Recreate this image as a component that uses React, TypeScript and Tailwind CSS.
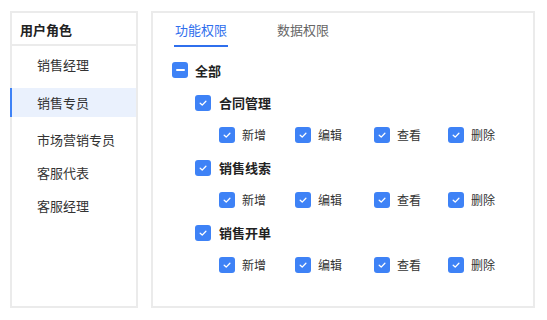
import React from "react";

const Check = ({ ind = false }: { ind?: boolean }) => (
  <span className="w-4 h-4 rounded-[3px] bg-[#3e82f6] flex items-center justify-center shrink-0">
    {ind ? (
      <span className="w-[9px] h-[2px] bg-white rounded-[1px]" />
    ) : (
      <svg width="10" height="10" viewBox="0 0 10 10">
        <path d="M2.2 5.3 L4.2 7.1 L7.9 3.2" stroke="white" strokeWidth="1.3" fill="none" strokeLinecap="round" strokeLinejoin="round" />
      </svg>
    )}
  </span>
);

const roles = ["销售经理", "销售专员", "市场营销专员", "客服代表", "客服经理"];
const groups = ["合同管理", "销售线索", "销售开单"];
const actions: [string, string][] = [
  ["新增", "w-[76px]"],
  ["编辑", "w-[79px]"],
  ["查看", "w-[74px]"],
  ["删除", "w-[60px]"],
];

export default function App() {
  return (
    <div className="w-[547px] h-[320px] bg-white flex gap-[13px] pl-[10px] pt-[11px] font-['Noto_Sans_CJK_SC','Noto_Sans',sans-serif]">
      <div className="w-[128px] h-[297px] border-2 border-[#ebebeb] flex flex-col">
        <div className="h-[33px] border-b-2 border-[#ebebeb] flex items-center pl-[8px] pt-[2px] text-[13px] font-bold text-[#222]">
          用户角色
        </div>
        <div className="flex flex-col">
          <div className="h-[38px] flex items-center pl-[25px] text-[13px] text-[#333]">{roles[0]}</div>
          <div className="h-[29px] mt-[4px] -ml-[2px] border-l-2 border-[#3e82f6] bg-[#eaf1fd] flex items-center pl-[25px] text-[13px] text-[#333]">{roles[1]}</div>
          <div className="h-[33px] mt-[6px] flex items-center pl-[25px] text-[13px] text-[#333]">{roles[2]}</div>
          <div className="h-[33px] flex items-center pl-[25px] text-[13px] text-[#333]">{roles[3]}</div>
          <div className="h-[34px] flex items-center pl-[25px] text-[13px] text-[#333]">{roles[4]}</div>
        </div>
      </div>
      <div className="w-[384px] h-[297px] border-2 border-[#ebebeb] flex flex-col">
        <div className="h-[34px] flex pl-[21px] gap-[48px]">
          <div className="h-full flex flex-col items-center justify-end">
            <span className="text-[13px] text-[#2f6fed] leading-none px-[1px] pb-[9px]">功能权限</span>
            <span className="w-[54px] h-[2px] bg-[#2f6fed]" />
          </div>
          <div className="h-full flex flex-col items-center justify-end">
            <span className="text-[13px] text-[#666] leading-none px-[1px] pb-[11px]">数据权限</span>
          </div>
        </div>
        <div className="flex flex-col mt-[7px] pl-[19px]">
          <div className="h-[32.5px] flex items-center gap-[7px]">
            <Check ind />
            <span className="text-[13px] font-bold text-[#222]">全部</span>
          </div>
          {groups.map((g) => (
            <React.Fragment key={g}>
              <div className="h-[32.5px] flex items-center gap-[8px] pl-[23px]">
                <Check />
                <span className="text-[13px] font-bold text-[#222]">{g}</span>
              </div>
              <div className="h-[32.5px] flex items-center pl-[47px]">
                {actions.map(([a, w]) => (
                  <div key={a} className={`${w} flex items-center gap-[7px]`}>
                    <Check />
                    <span className="text-[12px] text-[#333]">{a}</span>
                  </div>
                ))}
              </div>
            </React.Fragment>
          ))}
        </div>
      </div>
    </div>
  );
}
